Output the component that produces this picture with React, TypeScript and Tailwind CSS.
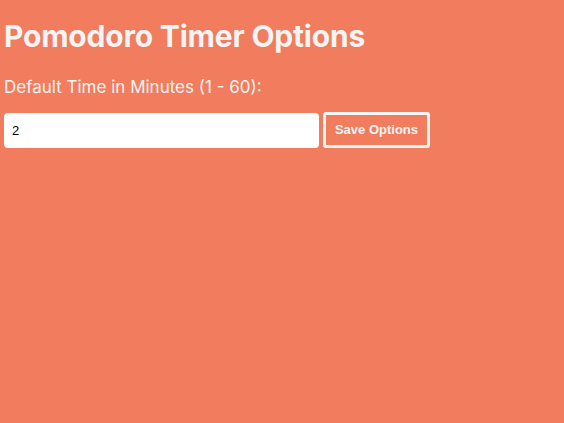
export default function App() {
  return (
    <div className="min-h-[423px] w-full bg-[#f17c5e] px-[4px] pt-[14px] text-[#f4f4f4]" style={{ fontFamily: "Inter, 'Noto Sans', sans-serif" }}>
      <h1 className="text-[30px] font-bold leading-[44px] tracking-[-0.2px]">Pomodoro Timer Options</h1>
      <p className="mt-[18px] text-[17px] leading-[22px]">Default Time in Minutes (1 - 60):</p>
      <div className="mt-[14px] flex items-center gap-[4px]">
        <input
          type="text"
          defaultValue="2"
          className="h-[35px] w-[315px] rounded-[4px] bg-white px-[8px] text-[13px] text-black outline-none"
          style={{ fontFamily: "'Liberation Sans', Arial, sans-serif" }}
        />
        <button
          className="h-[36px] w-[107px] rounded-[3px] border-[3px] border-[#f4f4f4] text-[13px] font-bold text-[#f4f4f4]"
          style={{ fontFamily: "'Liberation Sans', Arial, sans-serif" }}
        >
          Save Options
        </button>
      </div>
    </div>
  );
}
